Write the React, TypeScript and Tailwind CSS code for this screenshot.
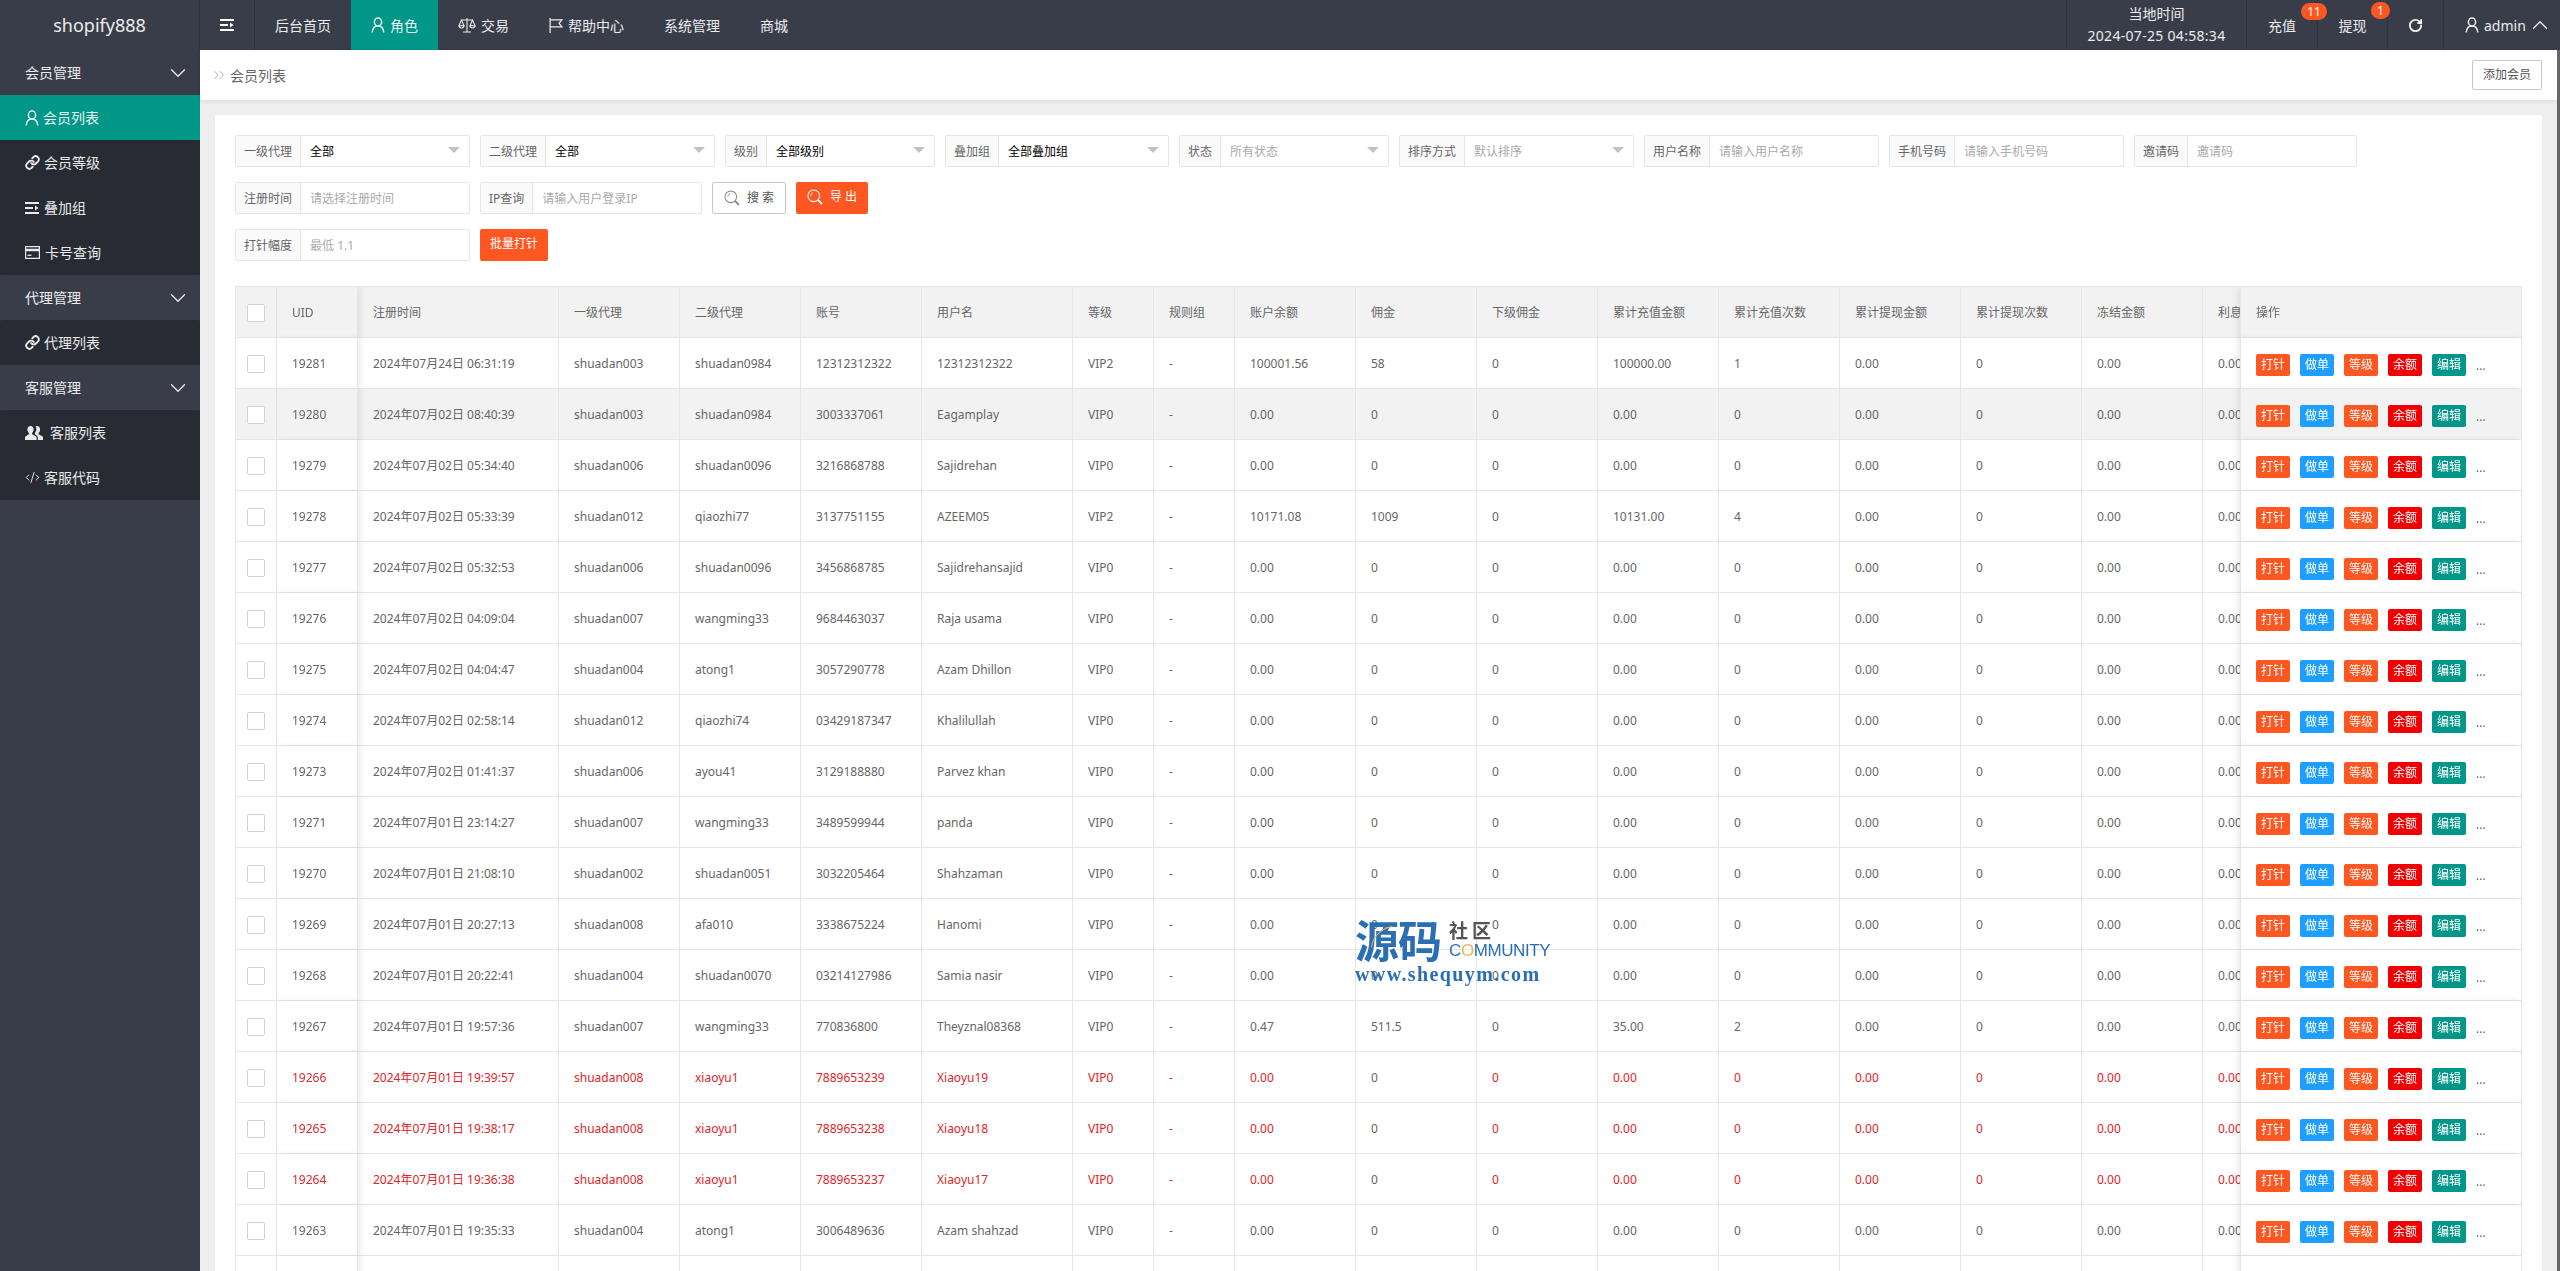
import { ChevronDown, ChevronUp, ChevronsRight, CodeXml, Link, RotateCw } from "lucide-react";

const UserIcon = ({ className = "w-[14px] h-[16px]" }: { className?: string }) => (
  <svg viewBox="0 0 14 16" fill="none" stroke="currentColor" strokeWidth="1.5" className={className}>
    <ellipse cx="7" cy="5" rx="3.6" ry="4" />
    <path d="M1.2 15.5c.3-4 2.4-6.6 5.8-6.6s5.5 2.6 5.8 6.6" />
  </svg>
);

const ShrinkIcon = ({ className = "w-[14px] h-[12px]" }: { className?: string }) => (
  <svg viewBox="0 0 14 12" fill="currentColor" className={className}>
    <rect x="0" y="0" width="14" height="2" />
    <rect x="0" y="5" width="8" height="2" />
    <path d="M10 3.6 13.6 6 10 8.4z" />
    <rect x="0" y="10" width="14" height="2" />
  </svg>
);

const ScaleIcon = () => (
  <svg viewBox="0 0 20 18" fill="none" stroke="currentColor" strokeWidth="1.2" className="w-[18px] h-[16px]">
    <path d="M10 1v15.5M5.5 16.8h9M3.8 3.4h12.4" />
    <path d="M3.8 3.4 1 9.8h5.6zM16.2 3.4 13.4 9.8H19z" />
    <path d="M1 9.8c.3 3.4 5.3 3.4 5.6 0M13.4 9.8c.3 3.4 5.3 3.4 5.6 0" />
  </svg>
);

const FlagIcon = () => (
  <svg viewBox="0 0 15 16" fill="none" stroke="currentColor" strokeWidth="1.3" className="w-[14px] h-[15px]">
    <path d="M1.2 0v16M1.2 2h12.6l-3 3.6 3 3.8H1.2" />
  </svg>
);

const CardIcon = () => (
  <svg viewBox="0 0 15 13" className="w-[15px] h-[13px]" fill="currentColor">
    <path d="M0 0h15v13H0zM1.2 1.2v1.6h12.6V1.2zM1.2 5.2v6.6h12.6V5.2z" fillRule="evenodd" />
    <rect x="2.5" y="8.6" width="4" height="1.3" />
  </svg>
);

const UsersIcon = () => (
  <svg viewBox="0 0 18 16" className="w-[18px] h-[16px]" fill="currentColor">
    <path d="M5.5 1C7.3 1 8.6 2.400 8.600 4.400c0 1.500-.6 2.800-1.500 3.500v1.300l3.700 2.100c.5.3.8.8.800 1.400V15H0v-2.300c0-.6.3-1.100.8-1.400l3.100-2.100V7.900C3 7.200 2.400 5.900 2.400 4.400 2.400 2.400 3.700 1 5.500 1z" />
    <path d="M12 1c1.800 0 3.100 1.400 3.100 3.400 0 1.500-.6 2.800-1.500 3.500v1.300l3.600 2.100c.5.300.8.800.8 1.400V15h-5.200v-2.500c0-.8-.4-1.500-1.100-1.900l-1.700-1v-2c.9-.9 1.400-2.300 1.400-3.600 0-1.100-.3-2.100-.9-2.900.3-.1.9-.1 1.500-.1z" />
  </svg>
);

const SearchIcon = ({ className }: { className: string }) => (
  <svg viewBox="0 0 17 17" fill="none" stroke="currentColor" className={className}>
    <circle cx="7.200" cy="7.200" r="6.200" strokeWidth="1.100" />
    <path d="M4.100 7.200c0-1.700 1-2.900 2.200-3.300" strokeWidth="1" />
    <path d="M11.600 11.600l4.300 4.300" strokeWidth="2" />
  </svg>
);

const topNav = ["系统管理", "商城"];

const NavItem = ({ icon, text, active }: { icon?: React.ReactNode; text: string; active?: boolean }) => (
  <a className={`flex items-center h-full px-5 gap-[5px] text-[14px] text-white/90 whitespace-nowrap ${active ? "bg-[#009688]" : ""}`}>
    {icon}
    {text}
  </a>
);

const SideGroup = ({ title }: { title: string }) => (
  <div className="h-[45px] flex items-center justify-between pl-[25px] pr-[9px] text-[14px] text-white/90">
    <span>{title}</span>
    <ChevronDown className="w-[26px] h-[26px]" strokeWidth={1.2} />
  </div>
);

const SideItem = ({ icon, text, active, gap = "gap-[4px]" }: { icon: React.ReactNode; text: string; active?: boolean; gap?: string }) => (
  <div className={`h-[45px] flex items-center pl-[25px] text-[14px] text-white/90 ${gap} ${active ? "bg-[#009688]" : ""}`}>
    {icon}
    <span>{text}</span>
  </div>
);

const Field = ({ label, value, placeholder, select, width }: { label: string; value?: string; placeholder?: string; select?: boolean; width: string }) => (
  <div className={`flex h-[32px] border border-[#e6e6e6] rounded-[2px] bg-white text-[12px] ${width}`}>
    <span className="flex items-center px-2 pt-[2px] bg-[#fafafa] text-[#666] border-r border-[#e6e6e6] whitespace-nowrap">{label}</span>
    <div className="flex-1 flex items-center justify-between px-[9px]">
      {value ? <span className="text-black pt-[2px]">{value}</span> : <span className="text-[#aaa] pt-[2px]">{placeholder}</span>}
      {select && <span className="w-0 h-0 mb-[2px] border-x-[6px] border-x-transparent border-t-[6px] border-t-[#c2c2c2]" />}
    </div>
  </div>
);

type Row = {
  uid: string; time: string; a1: string; a2: string; acct: string; name: string; level: string;
  bal?: string; comm?: string; amt?: string; cnt?: string; red?: boolean; hover?: boolean;
};

const rows: Row[] = [
  { uid: "19281", time: "2024年07月24日 06:31:19", a1: "shuadan003", a2: "shuadan0984", acct: "12312312322", name: "12312312322", level: "VIP2", bal: "100001.56", comm: "58", amt: "100000.00", cnt: "1" },
  { uid: "19280", time: "2024年07月02日 08:40:39", a1: "shuadan003", a2: "shuadan0984", acct: "3003337061", name: "Eagamplay", level: "VIP0", hover: true },
  { uid: "19279", time: "2024年07月02日 05:34:40", a1: "shuadan006", a2: "shuadan0096", acct: "3216868788", name: "Sajidrehan", level: "VIP0" },
  { uid: "19278", time: "2024年07月02日 05:33:39", a1: "shuadan012", a2: "qiaozhi77", acct: "3137751155", name: "AZEEM05", level: "VIP2", bal: "10171.08", comm: "1009", amt: "10131.00", cnt: "4" },
  { uid: "19277", time: "2024年07月02日 05:32:53", a1: "shuadan006", a2: "shuadan0096", acct: "3456868785", name: "Sajidrehansajid", level: "VIP0" },
  { uid: "19276", time: "2024年07月02日 04:09:04", a1: "shuadan007", a2: "wangming33", acct: "9684463037", name: "Raja usama", level: "VIP0" },
  { uid: "19275", time: "2024年07月02日 04:04:47", a1: "shuadan004", a2: "atong1", acct: "3057290778", name: "Azam Dhillon", level: "VIP0" },
  { uid: "19274", time: "2024年07月02日 02:58:14", a1: "shuadan012", a2: "qiaozhi74", acct: "03429187347", name: "Khalilullah", level: "VIP0" },
  { uid: "19273", time: "2024年07月02日 01:41:37", a1: "shuadan006", a2: "ayou41", acct: "3129188880", name: "Parvez khan", level: "VIP0" },
  { uid: "19271", time: "2024年07月01日 23:14:27", a1: "shuadan007", a2: "wangming33", acct: "3489599944", name: "panda", level: "VIP0" },
  { uid: "19270", time: "2024年07月01日 21:08:10", a1: "shuadan002", a2: "shuadan0051", acct: "3032205464", name: "Shahzaman", level: "VIP0" },
  { uid: "19269", time: "2024年07月01日 20:27:13", a1: "shuadan008", a2: "afa010", acct: "3338675224", name: "Hanomi", level: "VIP0" },
  { uid: "19268", time: "2024年07月01日 20:22:41", a1: "shuadan004", a2: "shuadan0070", acct: "03214127986", name: "Samia nasir", level: "VIP0" },
  { uid: "19267", time: "2024年07月01日 19:57:36", a1: "shuadan007", a2: "wangming33", acct: "770836800", name: "Theyznal08368", level: "VIP0", bal: "0.47", comm: "511.5", amt: "35.00", cnt: "2" },
  { uid: "19266", time: "2024年07月01日 19:39:57", a1: "shuadan008", a2: "xiaoyu1", acct: "7889653239", name: "Xiaoyu19", level: "VIP0", red: true },
  { uid: "19265", time: "2024年07月01日 19:38:17", a1: "shuadan008", a2: "xiaoyu1", acct: "7889653238", name: "Xiaoyu18", level: "VIP0", red: true },
  { uid: "19264", time: "2024年07月01日 19:36:38", a1: "shuadan008", a2: "xiaoyu1", acct: "7889653237", name: "Xiaoyu17", level: "VIP0", red: true },
  { uid: "19263", time: "2024年07月01日 19:35:33", a1: "shuadan004", a2: "atong1", acct: "3006489636", name: "Azam shahzad", level: "VIP0" },
];

const headers = ["注册时间", "一级代理", "二级代理", "账号", "用户名", "等级", "规则组", "账户余额", "佣金", "下级佣金", "累计充值金额", "累计充值次数", "累计提现金额", "累计提现次数", "冻结金额", "利息"];

const colClass = [
  "w-[201px]", "w-[121px]", "w-[121px]", "w-[121px]", "w-[151px]", "w-[81px]", "w-[81px]", "w-[121px]",
  "w-[121px]", "w-[121px]", "w-[121px]", "w-[121px]", "w-[121px]", "w-[121px]", "w-[121px]", "w-[121px]",
];

const actions = [
  { text: "打针", color: "bg-[#ff5722]" },
  { text: "做单", color: "bg-[#1e9fff]" },
  { text: "等级", color: "bg-[#ff5722]" },
  { text: "余额", color: "bg-[#f00000]" },
  { text: "编辑", color: "bg-[#009688]" },
];

const cell = "h-[51px] px-[15px] pt-[2px] border-r border-b border-[#e6e6e6] whitespace-nowrap overflow-hidden text-left font-normal";

const Checkbox = () => <span className="block w-[18px] h-[18px] bg-white border border-[#d2d2d2] rounded-[2px]" />;

const TableRow = ({ row }: { row: Row }) => {
  const bg = row.hover ? "bg-[#f2f2f2]" : "bg-white";
  const txt = row.red ? "text-[#e02428]" : "text-[#666]";
  const values = [
    row.time, row.a1, row.a2, row.acct, row.name, row.level, "-", row.bal ?? "0.00", row.comm ?? "0", "0",
    row.amt ?? "0.00", row.cnt ?? "0", "0.00", "0", "0.00", "0.00",
  ];
  return (
    <tr className={bg}>
      <td className={`sticky left-0 z-10 ${bg} ${cell} !px-[11px]`}><Checkbox /></td>
      <td className={`sticky left-[41px] z-10 ${bg} ${txt} ${cell} shadow-[3px_0_6px_rgba(0,0,0,0.07)]`}>{row.uid}</td>
      {values.map((v, i) => (
        <td key={i} className={`${cell} ${i === 8 ? "text-[#666]" : txt}`}>{v}</td>
      ))}
      <td className={`sticky right-0 z-10 ${bg} ${cell} border-l border-r-0 shadow-[-3px_0_6px_rgba(0,0,0,0.07)]`}>
        <div className="flex items-center gap-[10px] mt-[1px]">
          {actions.map((a) => (
            <span key={a.text} className={`w-[34px] h-[22px] flex items-center justify-center rounded-[2px] text-white ${a.color}`}>{a.text}</span>
          ))}
          <span className="text-[#666] mt-[2px]">...</span>
        </div>
      </td>
    </tr>
  );
};

export default function App() {
  return (
    <div className="relative h-screen w-full overflow-hidden flex flex-col font-['Noto_Sans','Noto_Sans_CJK_SC',sans-serif]">
      <header className="h-[50px] shrink-0 flex bg-[#393d49] text-white">
        <div className="w-[200px] flex items-center justify-center text-[18px] text-white/90 border-r border-[#2f323c]">shopify888</div>
        <div className="w-[55px] flex items-center justify-center border-r border-[#2f323c]"><ShrinkIcon /></div>
        <NavItem text="后台首页" />
        <NavItem active icon={<UserIcon />} text="角色" />
        <NavItem icon={<ScaleIcon />} text="交易" />
        <NavItem icon={<FlagIcon />} text="帮助中心" />
        {topNav.map((t) => <NavItem key={t} text={t} />)}
        <div className="ml-auto flex text-[14px] text-white/90">
          <div className="w-[180px] flex flex-col items-center justify-center border-l border-[#2f323c] leading-[22px]">
            <span>当地时间</span>
            <span className="tracking-[0.3px]">2024-07-25 04:58:34</span>
          </div>
          <div className="relative w-[71px] flex items-center justify-center border-l border-[#2f323c]">
            充值
            <span className="absolute left-[54px] top-[3px] z-10 h-[17px] w-[26px] rounded-full bg-[#ff5722] text-white text-[12px] leading-[17px] text-center">11</span>
          </div>
          <div className="relative w-[70px] flex items-center justify-center border-l border-[#2f323c]">
            提现
            <span className="absolute left-[53px] top-[2px] h-[17px] w-[19px] rounded-full bg-[#ff5722] text-white text-[12px] leading-[17px] text-center">1</span>
          </div>
          <div className="w-[56px] flex items-center justify-center border-l border-[#2f323c]">
            <RotateCw className="w-[15px] h-[15px]" strokeWidth={3} />
          </div>
          <div className="w-[117px] flex items-center pl-[21px] gap-[5px] border-l border-[#2f323c]">
            <UserIcon />
            <span>admin</span>
            <ChevronUp className="w-[26px] h-[26px] -ml-[4px]" strokeWidth={1.2} />
          </div>
        </div>
      </header>

      <div className="flex-1 min-h-0 flex">
        <aside className="w-[200px] shrink-0 bg-[#393d49]">
          <SideGroup title="会员管理" />
          <div className="bg-[#282b33] rounded-[2px]">
            <SideItem active icon={<UserIcon />} text="会员列表" />
            <SideItem icon={<Link className="w-[15px] h-[15px]" strokeWidth={3} />} text="会员等级" />
            <SideItem icon={<ShrinkIcon />} text="叠加组" gap="gap-[5px]" />
            <SideItem icon={<CardIcon />} text="卡号查询" gap="gap-[5px]" />
          </div>
          <SideGroup title="代理管理" />
          <div className="bg-[#282b33] rounded-[2px]">
            <SideItem icon={<Link className="w-[15px] h-[15px]" strokeWidth={3} />} text="代理列表" />
          </div>
          <SideGroup title="客服管理" />
          <div className="bg-[#282b33] rounded-[2px]">
            <SideItem icon={<UsersIcon />} text="客服列表" gap="gap-[7px]" />
            <SideItem icon={<CodeXml className="w-[15px] h-[15px]" strokeWidth={1.5} />} text="客服代码" />
          </div>
        </aside>

        <main className="flex-1 min-w-0 flex flex-col bg-[#eeeeee]">
          <div className="h-[50px] shrink-0 flex items-center justify-between bg-white pl-[15px] pr-[15px] shadow-[0_1px_4px_rgba(0,0,0,0.1)]">
            <div className="flex items-center gap-[2px] text-[14px] text-[#666]">
              <ChevronsRight className="w-[18px] h-[18px] -ml-[5px] text-[#999]" strokeWidth={1} />
              <span>会员列表</span>
            </div>
            <button className="w-[70px] h-[30px] border border-[#c9c9c9] rounded-[2px] bg-white text-[12px] text-[#555]">添加会员</button>
          </div>

          <div className="flex-1 min-h-0 mt-[15px] mx-[15px] bg-white p-5 overflow-hidden">
            <div className="flex flex-col gap-[15px]">
              <div className="flex gap-[10px]">
                <Field width="w-[235px]" label="一级代理" value="全部" select />
                <Field width="w-[235px]" label="二级代理" value="全部" select />
                <Field width="w-[210px]" label="级别" value="全部级别" select />
                <Field width="w-[224px]" label="叠加组" value="全部叠加组" select />
                <Field width="w-[210px]" label="状态" placeholder="所有状态" select />
                <Field width="w-[235px]" label="排序方式" placeholder="默认排序" select />
                <Field width="w-[235px]" label="用户名称" placeholder="请输入用户名称" />
                <Field width="w-[235px]" label="手机号码" placeholder="请输入手机号码" />
                <Field width="w-[223px]" label="邀请码" placeholder="邀请码" />
              </div>
              <div className="flex gap-[10px]">
                <Field width="w-[235px]" label="注册时间" placeholder="请选择注册时间" />
                <Field width="w-[222px]" label="IP查询" placeholder="请输入用户登录IP" />
                <button className="w-[74px] h-[32px] flex items-center justify-center gap-[7px] border border-[#c9c9c9] rounded-[2px] bg-white text-[12px] text-[#555]">
                  <SearchIcon className="w-[16px] h-[16px] text-[#888]" />
                  <span>搜 索</span>
                </button>
                <button className="w-[72px] h-[32px] flex items-center justify-center gap-[7px] rounded-[2px] bg-[#ff5722] text-[12px] text-white pb-[2px]">
                  <SearchIcon className="w-[16px] h-[16px]" />
                  <span>导 出</span>
                </button>
              </div>
              <div className="flex gap-[10px]">
                <Field width="w-[235px]" label="打针幅度" placeholder="最低 1.1" />
                <button className="w-[68px] h-[32px] rounded-[2px] bg-[#ff5722] text-[12px] text-white pb-[3px]">批量打针</button>
              </div>
            </div>

            <div className="mt-[25px] border-t border-x border-[#e6e6e6] overflow-hidden">
              <table className="w-[2369px] table-fixed border-separate border-spacing-0 text-[12px] text-[#666]">
                <colgroup>
                  <col className="w-[41px]" />
                  <col className="w-[81px]" />
                  {colClass.map((c, i) => <col key={i} className={c} />)}
                  <col className="w-[281px]" />
                </colgroup>
                <thead>
                  <tr className="bg-[#f2f2f2]">
                    <th className={`sticky left-0 z-10 bg-[#f2f2f2] ${cell} !px-[11px]`}><Checkbox /></th>
                    <th className={`sticky left-[41px] z-10 bg-[#f2f2f2] ${cell} shadow-[3px_0_6px_rgba(0,0,0,0.07)]`}>UID</th>
                    {headers.map((h) => <th key={h} className={cell}>{h}</th>)}
                    <th className={`sticky right-0 z-10 bg-[#f2f2f2] ${cell} border-l border-r-0 shadow-[-3px_0_6px_rgba(0,0,0,0.07)]`}>操作</th>
                  </tr>
                </thead>
                <tbody>
                  {rows.map((r) => <TableRow key={r.uid} row={r} />)}
                  <tr className="bg-white">
                    <td className={`sticky left-0 z-10 bg-white ${cell}`} />
                    <td className={`sticky left-[41px] z-10 bg-white ${cell} shadow-[3px_0_6px_rgba(0,0,0,0.07)]`} />
                    {headers.map((h) => <td key={h} className={cell} />)}
                    <td className={`sticky right-0 z-10 bg-white ${cell} border-l border-r-0 shadow-[-3px_0_6px_rgba(0,0,0,0.07)]`} />
                  </tr>
                </tbody>
              </table>
            </div>
          </div>
        </main>

        <div className="w-[3px] shrink-0 bg-[#666666]" />
      </div>

      {/* watermark */}
      <div className="absolute left-[1355px] top-[917px] z-20 w-[200px] pointer-events-none">
        <div className="flex items-start h-[50px]">
          <div className="relative -mt-[3px] text-[44px] leading-[50px] font-bold text-[#2a6eb4] font-['Noto_Sans_CJK_SC',sans-serif] tracking-[-1px]">
            源码
            <svg viewBox="0 0 30 30" fill="none" stroke="#e8b55a" strokeWidth="1.2" className="absolute left-[14px] top-[10px] w-[26px] h-[26px]">
              <path d="M3 27C4 15 14 5 27 3" />
            </svg>
          </div>
          <div className="ml-[8px] pt-[1px]">
            <div className="text-[19px] leading-[24px] font-bold text-[#555] tracking-[4px] font-['Noto_Sans_CJK_SC',sans-serif]">社区</div>
            <div className="text-[17px] leading-[18px] text-[#2a6eb4] tracking-[-0.4px] font-['Liberation_Sans',sans-serif]">C<span className="text-[#eab54e]">O</span>MMUNITY</div>
          </div>
        </div>
        <div className="-mt-[3px] text-[20px] leading-[20px] font-bold text-[#2a6eb4] tracking-[1.4px] whitespace-nowrap font-['Liberation_Serif',serif]">www.shequym.com</div>
      </div>
    </div>
  );
}
